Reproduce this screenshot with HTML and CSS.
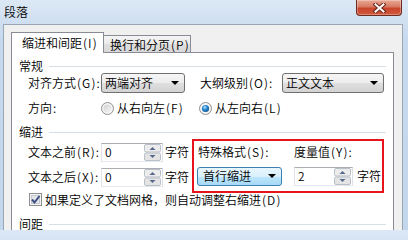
FILE: index.html
```html
<!DOCTYPE html>
<html lang="zh-CN">
<head>
<meta charset="utf-8">
<title>段落</title>
<link rel="stylesheet" href="styles.css">
</head>
<body>
<div class="window">
  <div class="titlebar">
    <span class="title">段落</span>
    <div class="close">
      <svg width="13" height="10" viewBox="0 0 13 10">
        <path d="M2.5 1.5 L10.5 8.5 M10.5 1.5 L2.5 8.5" stroke="#6a2418" stroke-width="4" stroke-linecap="square" fill="none"/>
        <path d="M2.5 1.5 L10.5 8.5 M10.5 1.5 L2.5 8.5" stroke="#ffffff" stroke-width="2" stroke-linecap="square" fill="none"/>
      </svg>
    </div>
  </div>
  <div class="client">
    <div class="tabs">
      <div class="tab tab-active">缩进和间距<span class="k">(I)</span></div>
      <div class="tab tab-idle">换行和分页<span class="k">(P)</span></div>
    </div>
    <div class="panel">
      <div class="group-head"><span class="group-title">常规</span><span class="rule"></span></div>
      <div class="row row-align">
        <span class="lbl">对齐方式<span class="k">(G):</span></span>
        <div class="combo combo-align"><span class="combo-text">两端对齐</span><span class="arrow"></span></div>
        <span class="lbl lbl-outline">大纲级别<span class="k">(O):</span></span>
        <div class="combo combo-outline"><span class="combo-text">正文文本</span><span class="arrow"></span></div>
      </div>
      <div class="row row-dir">
        <span class="lbl">方向<span class="k">:</span></span>
        <span class="opt opt-first">
          <svg class="radio" width="13" height="13" viewBox="0 0 13 13">
            <defs>
              <linearGradient id="rg" x1="0" y1="0" x2="1" y2="1">
                <stop offset="0" stop-color="#d0d0d0"/>
                <stop offset="1" stop-color="#f8f8f8"/>
              </linearGradient>
            </defs>
            <circle cx="6.5" cy="6.5" r="6" fill="#f4f4f4" stroke="#8e8f8f"/>
            <circle cx="6.5" cy="6.5" r="4" fill="url(#rg)"/>
          </svg>
          <span>从右向左<span class="k">(F)</span></span>
        </span>
        <span class="opt">
          <svg class="radio" width="13" height="13" viewBox="0 0 13 13">
            <defs>
              <radialGradient id="rb" cx="0.4" cy="0.35" r="0.7">
                <stop offset="0" stop-color="#b9e2fb"/>
                <stop offset="0.45" stop-color="#2c8bd4"/>
                <stop offset="1" stop-color="#0e4f8a"/>
              </radialGradient>
            </defs>
            <circle cx="6.5" cy="6.5" r="6" fill="#f4f4f4" stroke="#8e8f8f"/>
            <circle cx="6.5" cy="6.5" r="3.6" fill="url(#rb)"/>
          </svg>
          <span>从左向右<span class="k">(L)</span></span>
        </span>
      </div>
      <div class="group-head group-indent"><span class="group-title">缩进</span><span class="rule"></span></div>
      <div class="indent">
        <div class="indent-left">
          <div class="row row-spin">
            <span class="lbl">文本之前<span class="k">(R):</span></span>
            <div class="spin spin-left">
              <span class="spin-text">0</span>
              <svg class="spin-btns" width="17" height="17" viewBox="0 0 17 17">
                <rect x="0.5" y="0.5" width="16" height="7.5" rx="1.5" fill="#ececec" stroke="#b9bfc8"/>
                <rect x="0.5" y="9" width="16" height="7.5" rx="1.5" fill="#e4e4e4" stroke="#b9bfc8"/>
                <path d="M5.5 6 L8.5 3 L11.5 6 Z" fill="#55698c"/>
                <path d="M5.5 11 L8.5 14 L11.5 11 Z" fill="#55698c"/>
              </svg>
            </div>
            <span class="unit">字符</span>
          </div>
          <div class="row row-spin row-spin2">
            <span class="lbl">文本之后<span class="k">(X):</span></span>
            <div class="spin spin-left">
              <span class="spin-text">0</span>
              <svg class="spin-btns" width="17" height="17" viewBox="0 0 17 17">
                <rect x="0.5" y="0.5" width="16" height="7.5" rx="1.5" fill="#ececec" stroke="#b9bfc8"/>
                <rect x="0.5" y="9" width="16" height="7.5" rx="1.5" fill="#e4e4e4" stroke="#b9bfc8"/>
                <path d="M5.5 6 L8.5 3 L11.5 6 Z" fill="#55698c"/>
                <path d="M5.5 11 L8.5 14 L11.5 11 Z" fill="#55698c"/>
              </svg>
            </div>
            <span class="unit">字符</span>
          </div>
        </div>
        <div class="special">
          <div class="special-labels">
            <span class="sp-lbl">特殊格式<span class="k">(S):</span></span>
            <span>度量值<span class="k">(Y):</span></span>
          </div>
          <div class="special-ctrls">
            <div class="combo combo-hot"><span class="combo-text">首行缩进</span><span class="arrow"></span></div>
            <div class="spin spin-value">
              <span class="spin-text">2</span>
              <svg class="spin-btns" width="17" height="17" viewBox="0 0 17 17">
                <rect x="0.5" y="0.5" width="16" height="7.5" rx="1.5" fill="#ececec" stroke="#b9bfc8"/>
                <rect x="0.5" y="9" width="16" height="7.5" rx="1.5" fill="#e4e4e4" stroke="#b9bfc8"/>
                <path d="M5.5 6 L8.5 3 L11.5 6 Z" fill="#55698c"/>
                <path d="M5.5 11 L8.5 14 L11.5 11 Z" fill="#55698c"/>
              </svg>
            </div>
            <span class="unit">字符</span>
          </div>
        </div>
      </div>
      <div class="check-row">
        <svg class="check" width="13" height="13" viewBox="0 0 13 13">
          <rect x="0.5" y="0.5" width="12" height="12" fill="#f4f4f4" stroke="#8e8f8f"/>
          <rect x="2.5" y="2.5" width="8" height="8" fill="#e2e4e8" stroke="#c4c8cf"/>
          <path d="M3 6.5 L5.5 9.5 L10.5 3" stroke="#3b4f80" stroke-width="2" fill="none"/>
        </svg>
        <span>如果定义了文档网格，则自动调整右缩进<span class="k">(D)</span></span>
      </div>
      <div class="group-head group-spacing"><span class="group-title">间距</span><span class="rule"></span></div>
    </div>
  </div>
</div>
</body>
</html>
```

FILE: styles.css
```css
* {
  box-sizing: border-box;
}

html,
body {
  margin: 0;
  padding: 0;
}

body {
  width: 408px;
  height: 230px;
  overflow: hidden;
  font-family: "Noto Sans CJK SC", "Liberation Sans", sans-serif;
  font-size: 12px;
  font-weight: 350;
  line-height: 14px;
  color: #000;
  background: linear-gradient(to bottom, #dce8f5 0px, #c6d9ee 40px, #c3d7ec 230px);
}

.window {
  height: 230px;
  display: flex;
  flex-direction: column;
}

/* mnemonic / ascii run, spaced like the half-width dialog font */
.k {
  letter-spacing: 1.1px;
  margin-left: 1px;
}

/* title bar */
.titlebar {
  flex: none;
  height: 24px;
  display: flex;
  justify-content: space-between;
  align-items: flex-start;
}

.title {
  padding: 5px 0 0 4px;
}

.close {
  width: 46px;
  height: 16px;
  margin-right: 6px;
  border: 1px solid #6e2b1f;
  border-top: none;
  border-radius: 0 0 4px 4px;
  background: linear-gradient(to bottom, #e9a893 0%, #d77a63 45%, #c8452c 55%, #d0593e 100%);
  box-shadow: inset 0 0 0 1px rgba(255, 255, 255, 0.3);
  display: flex;
  justify-content: center;
  align-items: center;
}

/* client area */
.client {
  flex: 1;
  display: flex;
  flex-direction: column;
  margin: 0 5px 0 3px;
  padding: 7px 8px 0 7px;
  border: 1px solid #9aa6b4;
  border-bottom: none;
  background: #f0f0f0;
}

.tabs {
  flex: none;
  height: 20px;
  display: flex;
  align-items: flex-end;
}

.tab {
  border: 1px solid #898c95;
  border-bottom: none;
  white-space: nowrap;
}

.tab-active {
  position: relative;
  z-index: 1;
  width: 93px;
  height: 21px;
  margin-bottom: -1px;
  padding: 3px 0 0 10px;
  background: #fff;
}

.tab-idle {
  width: 87px;
  height: 17px;
  padding: 2px 0 0 6px;
  border-left: none;
  background: linear-gradient(to bottom, #f4f4f4 0%, #ebebeb 50%, #dfdfdf 51%, #d9d9d9 100%);
}

.panel {
  flex: 1;
  width: 383px;
  border: 1px solid #898c95;
  border-bottom: none;
  background: #fff;
  padding-top: 6px;
}

/* group headers */
.group-head {
  height: 14px;
  display: flex;
  align-items: center;
  padding: 0 7px 0 7px;
}

.group-title {
  flex: none;
}

.rule {
  flex: 1;
  height: 1px;
  margin-left: 6px;
  background: #d5dfe5;
}

.group-indent {
  margin-top: 7px;
}

.group-spacing {
  margin-top: 11px;
}

/* rows */
.row {
  height: 20px;
  display: flex;
  align-items: center;
  padding-left: 16px;
  white-space: nowrap;
}

.row-dir {
  margin-top: 5px;
}

.lbl {
  flex: none;
  width: 73px;
}

.lbl-outline {
  width: 82px;
  margin-left: 15px;
}

/* combo boxes */
.combo {
  flex: none;
  height: 20px;
  display: flex;
  align-items: center;
  justify-content: space-between;
  padding: 0 5px 0 3px;
  border: 1px solid #707070;
  border-radius: 3px;
  background: linear-gradient(to bottom, #f6f6f6 0%, #ececec 50%, #dfdfdf 51%, #d3d3d3 100%);
}

.combo-align {
  width: 84px;
}

.combo-outline {
  width: 102px;
}

.combo-hot {
  width: 85px;
  height: 19px;
  padding-left: 5px;
  border-color: #3c7fb1;
  background: linear-gradient(to bottom, #eaf6fd 0%, #d9f0fc 50%, #bee6fd 51%, #a7d9f5 100%);
}

.arrow {
  width: 0;
  height: 0;
  border-left: 4px solid transparent;
  border-right: 4px solid transparent;
  border-top: 4px solid #000;
}

/* radio options */
.opt {
  display: flex;
  align-items: center;
  gap: 3px;
}

.opt-first {
  width: 98px;
}

.radio {
  flex: none;
  display: block;
}

/* indent section */
.indent {
  display: flex;
  height: 54px;
}

.indent-left {
  width: 180px;
  padding-top: 3px;
}

.row-spin2 {
  margin-top: 5px;
}

.spin {
  flex: none;
  height: 19px;
  display: flex;
  align-items: center;
  justify-content: space-between;
  padding: 0 1px 0 3px;
  border: 1px solid;
  border-color: #abadb3 #dbdfe6 #e3e9ef #e2e3ea;
  background: #fff;
}

.spin-left {
  width: 62px;
}

.spin-value {
  width: 59px;
}

.spin-btns {
  display: block;
}

.unit {
  margin-left: 2px;
}

.special {
  width: 192px;
  border: 2px solid #e8141c;
}

.special-labels {
  display: flex;
  padding: 4px 0 0 4px;
  white-space: nowrap;
}

.sp-lbl {
  width: 96px;
}

.special-ctrls {
  display: flex;
  align-items: center;
  height: 20px;
  margin-top: 7px;
  padding-left: 3px;
  white-space: nowrap;
}

.special-ctrls .spin {
  margin-left: 12px;
}

.special-ctrls .unit {
  margin-left: 4px;
}

/* checkbox row */
.check-row {
  height: 13px;
  display: flex;
  align-items: center;
  gap: 3px;
  padding-left: 17px;
  white-space: nowrap;
}

.check {
  flex: none;
  display: block;
}
```
